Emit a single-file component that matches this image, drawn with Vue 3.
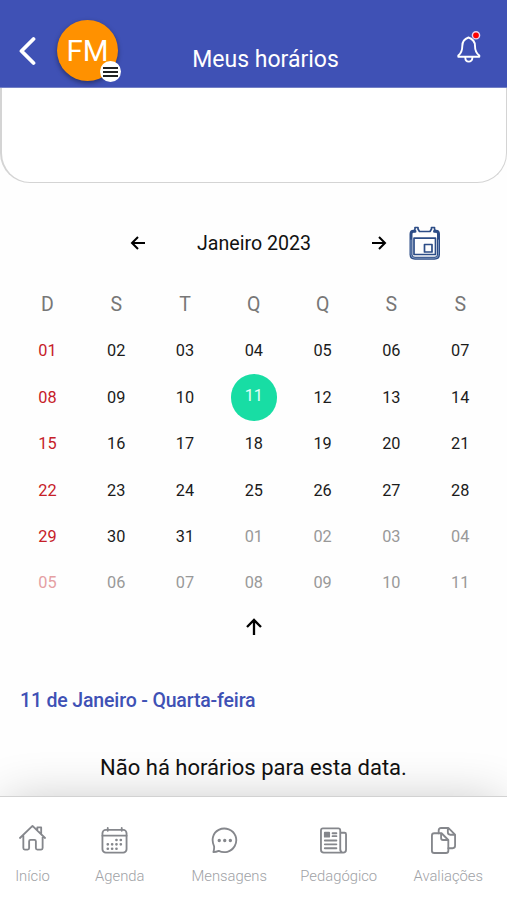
<template>
    <div class="screen">
        <header class="topbar">
            <svg class="back" width="18" height="30" viewBox="0 0 18 30">
                <path d="M14.500 3 L2.500 15 L14.500 27" />
            </svg>
            <div class="avatar">
                <span>FM</span>
                <div class="avatar-menu"><i></i><i></i><i></i></div>
            </div>
            <h1>Meus horários</h1>
            <svg class="bell" width="26" height="36" viewBox="0 0 26 36">
                <path d="M12.500 7.500 C8 9 6.300 12 6.300 16 C6.300 21 5 23.500 2.300 25.500 V26.800 H23.300 V25.500 C20.500 23.500 19 21 19 16 C19 12 17 9 12.500 7.500 Z" />
                <path d="M9.300 27.500 C9.300 33 16.400 33 16.400 27.500" />
                <circle cx="20" cy="5.300" r="3.600" />
            </svg>
        </header>

        <main>
            <section class="card"></section>

            <section class="calendar">
                <div class="month">
                    <svg class="arrow" width="16" height="16" viewBox="0 0 16 16"><path d="M15 8 H2 M8 2 L2 8 L8 14" /></svg>
                    <span>Janeiro 2023</span>
                    <svg class="arrow" width="16" height="16" viewBox="0 0 16 16"><path d="M1 8 H14 M8 2 L14 8 L8 14" /></svg>
                    <svg class="today" width="32" height="34" viewBox="0 0 32 34">
                        <path class="edge" d="M6 5.200 H4.500 Q2 5.200 2 8 V28.500 Q2 32.200 6 32.200 H25.500 Q29.500 32.200 29.500 28.500 V8 Q29.500 5.200 27 5.200 H25.500" />
                        <path class="shine" d="M2 14 V28.500 Q2 32.200 6 32.200 H25.500 Q29.500 32.200 29.500 28.500 V14" />
                        <path d="M6 1.500 V3 L5 5.500 M9 1.500 V3 L10.500 5.500 H21 L22.500 3 V1.500 M25.500 1.500 V3 L26.500 5.500 M6 1.500 H9 M22.500 1.500 H25.500" />
                        <path d="M5 12.200 H26.500 V28.500 H5 Z M15.500 18.500 H23 V26 H15.500 Z" />
                    </svg>
                </div>
                <div class="week names">
                    <span v-for="(name, i) in weekdays" :key="i">{{ name }}</span>
                </div>
                <div class="week days">
                    <span
                        v-for="(day, i) in days"
                        :key="i"
                        :class="{ sunday: i % 7 === 0, other: day.other, selected: i === 10 }"
                    ><b>{{ day.label }}</b></span>
                </div>
                <svg class="arrow collapse" width="18" height="18" viewBox="0 0 18 18"><path d="M9 17 V2 M2 9 L9 2 L16 9" /></svg>
            </section>

            <h2>11 de Janeiro - Quarta-feira</h2>
            <p class="empty">Não há horários para esta data.</p>
        </main>

        <nav class="tabs">
            <a v-for="tab in tabs" :key="tab.id" :class="tab.id">
                <svg width="27" height="27" viewBox="0 0 28 28">
                    <g v-if="tab.id === 'inicio'">
                        <path d="M1 14.500 L14 2 L27 14.500 M4.500 12 V25 Q4.500 26.500 6 26.500 H9 Q10.500 26.500 10.500 25 V18 Q10.500 16.500 12 16.500 H16 Q17.500 16.500 17.500 18 V25 Q17.500 26.500 19 26.500 H23 Q24.500 26.500 24.500 25 V12 M19 6 V3.500 H23 V10" />
                    </g>
                    <g v-else-if="tab.id === 'agenda'">
                        <rect x="1.500" y="3" width="25" height="23.500" rx="3.500" />
                        <path d="M1.500 9 H26.500 M7 1 V4 M21.500 1 V4" />
                        <path class="dots" d="M16 13.500h.1M20.500 13.500h.1M7 18h.1M11.500 18h.1M16 18h.1M20.500 18h.1M7 22.500h.1M11.500 22.500h.1M16 22.500h.1" />
                    </g>
                    <g v-else-if="tab.id === 'mensagens'">
                        <path d="M2.500 26 Q3.500 23 3.200 20 C0 13 2 6 8 3 C15 -.5 23 3 25.500 9.500 C28 17 23.500 24 17 25.700 C13.500 26.600 10.500 26 8 24.800 C6 25.700 4.500 26 2.500 26 Z" />
                        <path class="dots big" d="M8.500 14h.1M14.200 14h.1M20 14h.1" />
                    </g>
                    <g v-else-if="tab.id === 'pedagogico'">
                        <path d="M21 24 V3.500 Q21 1.500 19 1.500 H3 Q1 1.500 1 3.500 V23.500 Q1 26.500 4 26.500 H24 Q27 26.500 27 23.500 V7.500 Q27 6 25.500 6 H21 M21 22 Q21 26.500 24 26.500" />
                        <path d="M13 6.500 H17 M13 9.500 H17 M5 14 H17 M5 18 H17 M5 22 H17" />
                        <rect class="solid" x="5" y="6" width="4.500" height="4" />
                    </g>
                    <g v-else>
                        <path d="M9 6.500 V3.500 Q9 1 11.500 1 H19 L26 8 V19.500 Q26 22 23.500 22 H19 M18.500 1 V5.500 Q18.500 8 21 8 H26" />
                        <path d="M4.500 6.500 H12 L19 13.500 V25 Q19 27 16.500 27 H4.500 Q2 27 2 25 V9 Q2 6.500 4.500 6.500 Z M11.500 6.500 V11.500 Q11.500 13.500 13.500 13.500 H19" />
                    </g>
                </svg>
                <span>{{ tab.label }}</span>
            </a>
        </nav>
    </div>
</template>

<script setup>
const weekdays = ['D', 'S', 'T', 'Q', 'Q', 'S', 'S']

// 31 days of January, then the first days of February
const days = Array.from({ length: 42 }, (_, i) => ({
    label: String(i < 31 ? i + 1 : i - 30).padStart(2, '0'),
    other: i >= 31
}))

const tabs = [
    { id: 'inicio', label: 'Início' },
    { id: 'agenda', label: 'Agenda' },
    { id: 'mensagens', label: 'Mensagens' },
    { id: 'pedagogico', label: 'Pedagógico' },
    { id: 'avaliacoes', label: 'Avaliações' }
]
</script>

<style>
body {
    margin: 0;
    background: #fefefe;
}
</style>

<style scoped>
.screen {
    width: 507px;
    height: 900px;
    display: flex;
    flex-direction: column;
    overflow: hidden;
    background: #fefefe;
    font-family: Roboto, sans-serif;
}

svg {
    display: block;
    fill: none;
    stroke-linecap: round;
    stroke-linejoin: round;
}

.topbar {
    box-sizing: border-box;
    height: 88px;
    flex-shrink: 0;
    display: grid;
    grid-template-columns: 57px 62px 293px 1fr;
    background: #3f51b5;
    border-bottom: 1px solid #7380c5;
    color: #fff;
}

.back {
    margin: 36px 0 0 19px;
    stroke: #fff;
    stroke-width: 3.8;
}

.avatar {
    position: relative;
    width: 61px;
    height: 61px;
    margin-top: 20px;
    border-radius: 50%;
    background: #ff9100;
    box-shadow: 0 2px 5px rgba(0, 0, 0, .4);
    font-size: 29.5px;
    line-height: 63px;
    text-align: center;
}

.avatar-menu {
    position: absolute;
    right: -3px;
    bottom: -1px;
    width: 21px;
    height: 21px;
    border-radius: 50%;
    background: #fff;
    display: flex;
    flex-direction: column;
    align-items: center;
    justify-content: center;
    gap: 2px;
}

.avatar-menu i {
    width: 15px;
    height: 2px;
    background: #222;
}

h1 {
    margin: 45px 0 0;
    font-size: 23px;
    line-height: 30px;
    font-weight: 400;
    text-align: center;
}

.bell {
    margin: 30px 0 0 44px;
    stroke: #fff;
    stroke-width: 1.9;
}

.bell circle {
    fill: #f00;
    stroke: #e9d5ee;
    stroke-width: 1.4;
}

main {
    flex: 1;
    min-height: 0;
}

.card {
    box-sizing: border-box;
    height: 95px;
    border: 1px solid #d4d4d4;
    border-width: 0 1px 1px 2px;
    border-radius: 0 0 30px 30px;
    background: #fff;
}

.month {
    display: grid;
    grid-template-columns: 16px 225px 16px 54px;
    align-items: center;
    height: 34px;
    margin: 43px 0 0 130px;
    font-size: 19.6px;
    text-align: center;
    color: #111;
}

.month span {
    margin-right: 9px;
}

.month .today {
    margin-left: 21.5px;
}

.arrow {
    stroke: #000;
    stroke-width: 2;
    stroke-linecap: butt;
    stroke-linejoin: miter;
}

.today {
    stroke: #2c4c86;
    stroke-width: 1.7;
}

.today .edge {
    stroke-width: 3;
}

.today .shine {
    stroke: #8da3c8;
    stroke-width: .8;
}

.week {
    display: grid;
    grid-template-columns: repeat(7, 68.8px);
    margin-left: 13px;
    text-align: center;
}

.names {
    margin-top: 30px;
    font-size: 19.5px;
    line-height: 30px;
    color: #777;
}

.days {
    margin-top: 7.8px;
    grid-auto-rows: 46.4px;
    font-size: 16.3px;
    color: #1b1b1b;
}

.days span {
    display: flex;
    align-items: center;
    justify-content: center;
}

.days b {
    font-weight: 400;
}

.days .sunday {
    color: #c62028;
}

.days .other {
    color: #999;
}

.days .sunday.other {
    color: #e5a0a3;
}

.days .selected b {
    width: 46.4px;
    height: 46.4px;
    border-radius: 50%;
    background: #18dda4;
    color: #e6fff7;
    line-height: 43px;
}

.collapse {
    margin: 12.2px auto 0;
    stroke-width: 2.3;
}

h2 {
    margin: 50px 0 0 20px;
    font-size: 19.5px;
    line-height: 30px;
    font-weight: 500;
    letter-spacing: -.16px;
    color: #3f51b5;
}

.empty {
    margin: 37px 0 0;
    font-size: 22px;
    line-height: 30px;
    text-align: center;
    color: #111;
}

.tabs {
    box-sizing: border-box;
    position: relative;
    height: 104px;
    flex-shrink: 0;
    display: grid;
    grid-template-columns: 65px repeat(4, 109.5px);
    background: #fff;
    border-top: 1px solid #d2d2d2;
    box-shadow: 0 0 50px -6px rgba(0, 0, 0, .24);
    color: #a0a2a6;
}

.tabs a {
    display: flex;
    flex-direction: column;
    align-items: center;
    padding-top: 30px;
    font-size: 14.8px;
    line-height: 20px;
    font-weight: 300;
}

.tabs svg {
    margin-right: 10px;
    stroke: #85878c;
    stroke-width: 1.9;
}

.tabs .inicio svg {
    margin: -3px 0 3px;
}

.tabs span {
    margin: 12px 0 0;
}

.tabs .dots {
    stroke-width: 2.7;
}

.tabs .dots.big {
    stroke-width: 3.4;
}

.tabs .solid {
    fill: #85878c;
}
</style>
